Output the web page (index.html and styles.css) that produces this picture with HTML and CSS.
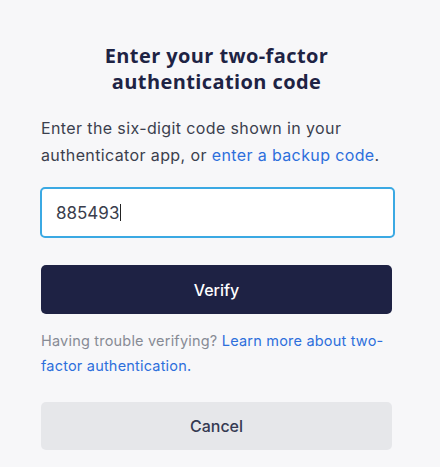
FILE: index.html
```html
<!DOCTYPE html>
<html lang="en">
<head>
    <meta charset="UTF-8">
    <meta name="viewport" content="width=device-width, initial-scale=1.0">
    <title>Two-factor authentication</title>
    <link rel="stylesheet" href="styles.css">
</head>
<body>
    <div class="container">
        <h1>Enter your two-factor<br>authentication code</h1>
        <p class="intro">Enter the six-digit code shown in your authenticator app, or <a href="#">enter a backup code</a>.</p>
        <div class="field">
            <span class="code">885493</span><span class="caret"></span>
        </div>
        <button class="btn btn-primary">Verify</button>
        <p class="help">Having trouble verifying? <a href="#">Learn more about two-factor authentication.</a></p>
        <button class="btn btn-secondary">Cancel</button>
    </div>
</body>
</html>
```

FILE: styles.css
```css
body {
    margin: 0;
    padding: 0;
    background-color: #f7f7f9;
    font-family: 'Inter', 'Liberation Sans', sans-serif;
    color: #3b3f4e;
}
.container {
    width: 351px;
    margin-left: 41px;
    padding-top: 43px;
}
h1 {
    margin: 0;
    font-family: 'Open Sans', sans-serif;
    font-size: 20px;
    font-weight: 700;
    letter-spacing: 0.4px;
    line-height: 26px;
    text-align: center;
    color: #1e2344;
}
a {
    color: #2d6fdc;
    text-decoration: none;
}
.intro {
    margin: 20px 0 0;
    font-size: 16px;
    letter-spacing: 0.38px;
    line-height: 27px;
}
.field {
    box-sizing: border-box;
    margin: 18px 0 0 -1px;
    width: 355px;
    height: 51px;
    border: 2px solid #3ba9e3;
    border-radius: 5px;
    background: #fff;
    display: flex;
    align-items: center;
    padding-left: 14px;
    font-size: 17px;
    color: #3a3d4c;
}
.caret {
    width: 1px;
    height: 17px;
    background: #222;
    margin-left: 1px;
}
.btn {
    display: block;
    width: 100%;
    height: 49px;
    border: none;
    border-radius: 5px;
    font-family: 'Inter', sans-serif;
    font-size: 16px;
    font-weight: 500;
    cursor: pointer;
}
.btn-primary {
    margin-top: 27px;
    background-color: #1e2244;
    color: #fff;
}
.btn-secondary {
    margin-top: 24px;
    background-color: #e6e7ea;
    color: #353a52;
    height: 48px;
}
.help {
    margin: 14px 0 0;
    font-size: 14.5px;
    letter-spacing: 0.2px;
    line-height: 25px;
    color: #878b95;
}
```
